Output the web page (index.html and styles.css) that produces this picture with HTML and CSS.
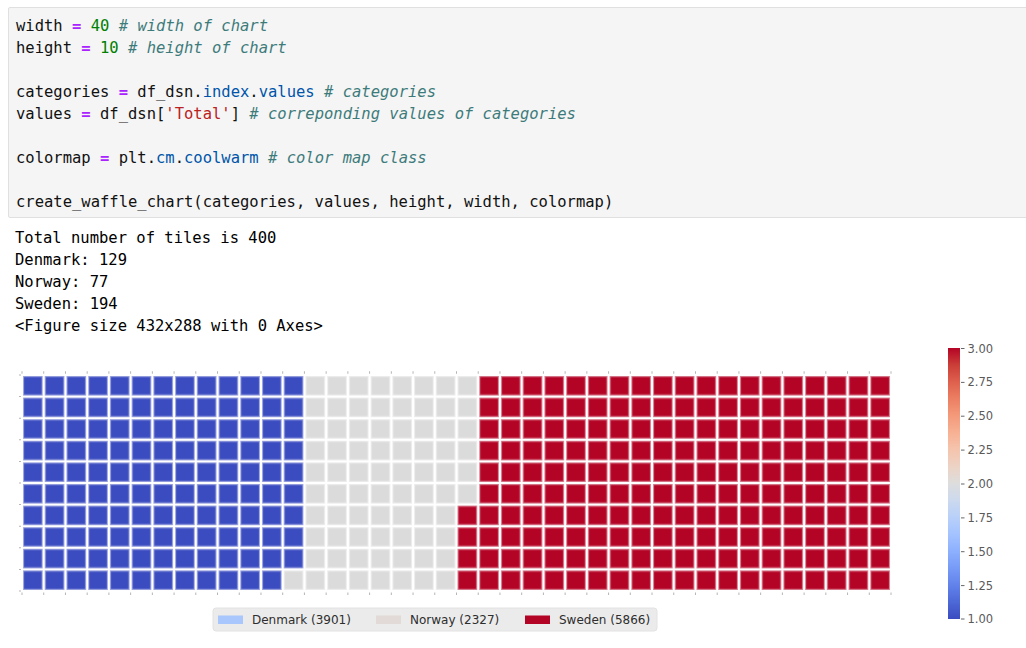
FILE: index.html
```html
<!DOCTYPE html>
<html>
<head>
<meta charset="utf-8">
<link rel="stylesheet" href="styles.css">
</head>
<body>
<div class="cell"><pre class="code"><span class="n">width</span> <span class="o">=</span> <span class="mi">40</span> <span class="c">#&nbsp;width of chart</span>
<span class="n">height</span> <span class="o">=</span> <span class="mi">10</span> <span class="c"># height of chart</span>

categories <span class="o">=</span> df_dsn.<span class="p">index</span>.<span class="p">values</span> <span class="c"># categories</span>
values <span class="o">=</span> df_dsn[<span class="s">'Total'</span>] <span class="c"># correponding values of categories</span>

colormap <span class="o">=</span> plt.<span class="p">cm</span>.<span class="p">coolwarm</span> <span class="c"># color map class</span>

create_waffle_chart(categories, values, height, width, colormap)</pre></div>
<pre class="out">Total number of tiles is 400
Denmark: 129
Norway: 77
Sweden: 194
&lt;Figure size 432x288 with 0 Axes&gt;</pre>
<svg class="fig" width="1026" height="300" viewBox="0 0 1026 300" xmlns="http://www.w3.org/2000/svg">
  <defs>
    <pattern id="grid" x="22" y="35" width="21.725" height="21.6" patternUnits="userSpaceOnUse">
      <path d="M0 0H21.725M0 21.6H21.725M0 0V21.6M21.725 0V21.6" stroke="#ffffff" stroke-opacity="0.45" stroke-width="4.2" fill="none"/>
      <path d="M0 0H21.725M0 21.6H21.725M0 0V21.6M21.725 0V21.6" stroke="#ffffff" stroke-width="2.2" fill="none"/>
    </pattern>
    <linearGradient id="cw" x1="0" y1="1" x2="0" y2="0">
      <stop offset="0" stop-color="#3b4cc0"/>
      <stop offset="0.0625" stop-color="#4d68d7"/>
      <stop offset="0.125" stop-color="#6282ea"/>
      <stop offset="0.1875" stop-color="#779af7"/>
      <stop offset="0.25" stop-color="#8db0fe"/>
      <stop offset="0.3125" stop-color="#a3c2ff"/>
      <stop offset="0.375" stop-color="#b8d0f9"/>
      <stop offset="0.4375" stop-color="#ccd9ee"/>
      <stop offset="0.5" stop-color="#dddddd"/>
      <stop offset="0.5625" stop-color="#ecd3c5"/>
      <stop offset="0.625" stop-color="#f5c4ad"/>
      <stop offset="0.6875" stop-color="#f7b194"/>
      <stop offset="0.75" stop-color="#f49a7b"/>
      <stop offset="0.8125" stop-color="#ec7f63"/>
      <stop offset="0.875" stop-color="#de604d"/>
      <stop offset="0.9375" stop-color="#cb3e38"/>
      <stop offset="1" stop-color="#b40426"/>
    </linearGradient>
  </defs>

  <g class="waffle">
    <path d="M22 35H304.425V229.4H282.7V251H22Z" fill="#3b4cc0"/>
    <path d="M304.425 35H478.225V164.6H456.5V251H282.7V229.4H304.425Z" fill="#dcdbdb"/>
    <path d="M478.225 35H891V251H456.5V164.6H478.225Z" fill="#b40426"/>
    <rect x="19" y="32" width="875" height="222" fill="url(#grid)"/>
  </g>

  <g class="ticks" stroke="#b5b5b5" fill="none">
    <line x1="21.5" y1="32.5" x2="892" y2="32.5" stroke-width="2.5" stroke-dasharray="1 20.725"/>
    <line x1="21.5" y1="253.8" x2="892" y2="253.8" stroke-width="2.5" stroke-dasharray="1 20.725"/>
    <line x1="20" y1="34.5" x2="20" y2="252" stroke-width="2" stroke-dasharray="1 20.6"/>
  </g>

  <g class="cbar">
    <rect x="948" y="8" width="12" height="271" fill="url(#cw)"/>
    <g stroke="#666" stroke-width="1">
      <line x1="961" y1="8.5" x2="964.5" y2="8.5"/>
      <line x1="961" y1="42.4" x2="964.5" y2="42.4"/>
      <line x1="961" y1="76.2" x2="964.5" y2="76.2"/>
      <line x1="961" y1="110.1" x2="964.5" y2="110.1"/>
      <line x1="961" y1="144" x2="964.5" y2="144"/>
      <line x1="961" y1="177.9" x2="964.5" y2="177.9"/>
      <line x1="961" y1="211.7" x2="964.5" y2="211.7"/>
      <line x1="961" y1="245.6" x2="964.5" y2="245.6"/>
      <line x1="961" y1="279" x2="964.5" y2="279"/>
    </g>
    <g class="cbl">
      <text x="967.5" y="12.5">3.00</text>
      <text x="967.5" y="46.4">2.75</text>
      <text x="967.5" y="80.2">2.50</text>
      <text x="967.5" y="114.1">2.25</text>
      <text x="967.5" y="148">2.00</text>
      <text x="967.5" y="181.9">1.75</text>
      <text x="967.5" y="215.7">1.50</text>
      <text x="967.5" y="249.6">1.25</text>
      <text x="967.5" y="283.4">1.00</text>
    </g>
  </g>

  <g class="legend">
    <rect x="213" y="268" width="444" height="23" rx="3" fill="#ebebeb" stroke="#e2e2e2"/>
    <rect x="218" y="275.5" width="25" height="8.5" fill="#a9c6fd"/>
    <text x="252" y="284.3">Denmark (3901)</text>
    <rect x="376" y="275.5" width="25" height="8.5" fill="#e1dad6"/>
    <text x="410" y="284.3">Norway (2327)</text>
    <rect x="525" y="275.5" width="25" height="8.5" fill="#b40426"/>
    <text x="559" y="284.3">Sweden (5866)</text>
  </g>
</svg>
</body>
</html>
```

FILE: styles.css
```css
html, body {
  margin: 0;
  padding: 0;
  background: #ffffff;
  overflow: hidden;
}

.cell {
  margin: 7px 0 0 8px;
  width: 1040px;
  box-sizing: border-box;
  background: #f5f5f5;
  border: 1px solid #e0e0e0;
  border-radius: 2px;
  padding: 7px 7px 4px 7px;
}

pre {
  margin: 0;
  font-family: "DejaVu Sans Mono", "Liberation Mono", monospace;
  font-size: 15.5px;
  line-height: 22px;
  color: #000000;
}

.code {
  color: #111111;
}

.code .o {
  color: #aa22ff;
  font-weight: bold;
}

.code .mi {
  color: #008000;
}

.code .c {
  color: #3d7b7b;
  font-style: italic;
}

.code .p {
  color: #0055aa;
}

.code .s {
  color: #ba2121;
}

.out {
  margin: 9px 0 0 15px;
}

.fig {
  display: block;
  margin-top: 3px;
}

.cbl text {
  font-family: "DejaVu Sans", sans-serif;
  font-size: 11.5px;
  fill: #5a5a5a;
}

.legend text {
  font-family: "DejaVu Sans", sans-serif;
  font-size: 12px;
  fill: #2e2e2e;
}
```
